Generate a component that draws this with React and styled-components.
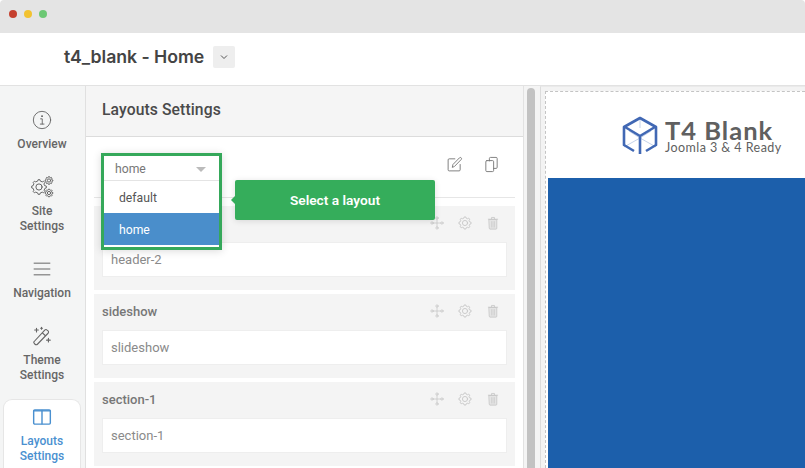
import React from "react";
import styled, { createGlobalStyle } from "styled-components";

const Global = createGlobalStyle`
  html, body { margin: 0; padding: 0; background: #fff; }
  body { width: 805px; height: 468px; overflow: hidden; font-family: Roboto, "Liberation Sans", sans-serif; }
  * { box-sizing: border-box; }
`;
const Page = styled.div`width:805px;height:468px;overflow:hidden;display:flex;flex-direction:column;background:#fff;`;
const TitleBar = styled.div`height:33px;flex:none;background:#e4e4e4;border-radius:4px 4px 0 0;display:flex;align-items:center;gap:7px;padding:0 0 5px 9px;`;
const Dot = styled.span`width:8px;height:8px;border-radius:50%;background:${p => p.$c};`;
const TopBar = styled.div`height:53px;flex:none;background:#fff;border-bottom:1px solid #e2e2e2;display:flex;align-items:center;padding:0 0 4px 64px;gap:9px;`;
const PageTitle = styled.div`font-family:Inter,Roboto,sans-serif;font-size:17.7px;font-weight:600;color:#444;letter-spacing:-0.05px;margin-top:-2px;`;
const TitleBtn = styled.div`width:22px;height:22px;background:#eee;border-radius:2px;display:flex;align-items:center;justify-content:center;`;
const Body = styled.div`flex:1;display:flex;min-height:0;`;
const Sidebar = styled.nav`width:86px;flex:none;background:#f4f5f5;border-right:1px solid #e0e0e0;padding:22px 4px 0 3px;display:flex;flex-direction:column;align-items:stretch;`;
const NavItem = styled.div`
  display:flex;flex-direction:column;align-items:center;text-align:center;
  height:${p => p.$h}px;padding-top:${p => p.$active ? 5 : 0}px;
  color:${p => p.$active ? "#4a90d0" : "#666"};font-size:12px;font-weight:500;line-height:15px;
  ${p => p.$active ? "background:#fff;border:1px solid #e6e6e6;border-bottom:none;border-radius:9px 9px 0 0;margin-top:-1px;" : ""}
`;
const NavIcon = styled.div`height:24px;display:flex;align-items:center;justify-content:center;margin-bottom:5px;color:${p => p.$active ? "#4a90d0" : "#666"};`;
const Panel = styled.section`width:437px;flex:none;background:#fff;display:flex;flex-direction:column;position:relative;`;
const PanelHead = styled.header`height:51px;flex:none;background:#f5f5f5;border-bottom:1px solid #dcdcdc;padding:0 16px 3px;display:flex;align-items:center;font-size:15.7px;font-weight:500;color:#4a4a4a;letter-spacing:.1px;`;
const Toolbar = styled.div`height:61px;flex:none;margin:0 8px;border-bottom:1px solid #e6e6e6;display:flex;justify-content:flex-end;align-items:flex-start;gap:20px;padding:19px 15px 0 0;color:#777;`;
const Rows = styled.div`display:flex;flex-direction:column;gap:4px;padding:8px 8px 0;`;
const Row = styled.div`height:84px;flex:none;background:#f4f4f4;padding:0 8px;display:flex;flex-direction:column;`;
const RowHead = styled.div`height:36px;flex:none;display:flex;align-items:center;justify-content:space-between;padding:0 7px 2px 0;font-size:13px;font-weight:500;color:#777;`;
const RowTools = styled.div`display:flex;gap:14px;color:#c6c6c6;`;
const RowInput = styled.div`height:35px;background:#fff;border:1px solid #eee;padding:0 8px;display:flex;align-items:center;font-size:13px;color:#8a8a8a;`;
const Dropdown = styled.div`position:absolute;left:15px;top:67px;width:121px;height:97px;border:3px solid #35a85a;background:#fff;box-shadow:0 1px 8px rgba(0,0,0,.15);font-size:12.2px;`;
const Selected = styled.div`height:25px;border-bottom:1px solid #e4e4e4;display:flex;align-items:center;justify-content:space-between;padding:1px 13px 0 11px;color:#777;`;
const Caret = styled.span`width:0;height:0;border-left:5.5px solid transparent;border-right:5.5px solid transparent;border-top:5.5px solid #bbb;margin-top:1px;`;
const Option = styled.div`height:32px;display:flex;align-items:center;padding:1px 0 0 15px;background:${p => p.$on ? "#4a8ecb" : "#fff"};color:${p => p.$on ? "#fff" : "#555"};`;
const Tip = styled.div`position:absolute;left:149px;top:94px;width:200px;height:40px;background:#35ad5b;border-radius:2px;color:#fff;font-size:13.7px;font-weight:600;display:flex;align-items:center;justify-content:center;box-shadow:0 1px 6px rgba(0,0,0,.12);
  &::before{content:"";position:absolute;left:-4px;top:16px;border-top:4px solid transparent;border-bottom:4px solid transparent;border-right:4px solid #35ad5b;}`;
const Scroll = styled.div`width:17px;flex:none;background:#f4f4f4;border-left:1px solid #e2e2e2;padding:2px 5px 0 3px;`;
const Thumb = styled.div`height:100%;background:#c2c2c2;border-radius:4px 4px 0 0;`;
const Preview = styled.div`flex:1;background:#f3f3f3;border-left:1px solid #dcdcdc;border-top:1px solid #eaeaea;padding:4px 0 0 4px;min-width:0;display:flex;`;
const Frame = styled.div`flex:1;border:1px dashed #c4c4c4;border-right:none;border-bottom:none;background:#fff;padding-left:2px;display:flex;flex-direction:column;`;
const LogoBar = styled.div`height:86px;flex:none;background:#fff;display:flex;align-items:center;padding:2px 0 0 74px;gap:7px;`;
const LogoText = styled.div`display:flex;flex-direction:column;color:#606060;`;
const LogoMain = styled.div`font-family:Lato,sans-serif;font-size:25.5px;font-weight:700;line-height:23px;letter-spacing:1px;`;
const LogoSub = styled.div`font-family:Lato,sans-serif;font-size:12.5px;font-weight:400;line-height:12px;letter-spacing:.45px;`;
const Hero = styled.div`flex:1;background:#1c5fab;`;

const Svg = ({ s = 16, children, w = 1.2, vb = 24 }) => (
  <svg width={s} height={s} viewBox={`0 0 ${vb} ${vb}`} fill="none" stroke="currentColor" strokeWidth={w} strokeLinecap="round" strokeLinejoin="round">{children}</svg>
);
const Gear = ({ cx, cy, r, teeth = 8 }) => {
  let d = "";
  for (let i = 0; i < teeth; i++) {
    const a = (i / teeth) * Math.PI * 2, st = Math.PI / teeth;
    const p = (rr, t) => `${(cx + rr * Math.cos(t)).toFixed(2)} ${(cy + rr * Math.sin(t)).toFixed(2)}`;
    d += `${i ? "L" : "M"}${p(r * .82, a - st * .55)}L${p(r, a - st * .3)}L${p(r, a + st * .3)}L${p(r * .82, a + st * .55)}`;
  }
  return <g><path d={d + "Z"} /><circle cx={cx} cy={cy} r={r * .42} /></g>;
};
const InfoIcon = () => <Svg s={20} w={1.1}><circle cx="12" cy="12" r="10.4" /><path d="M10.3 10.6h2v6.2M10 16.9h4.4" /><path d="M11.9 7.4h.3" strokeWidth="2" /></Svg>;
const GearsIcon = () => <Svg s={24} w={1}><Gear cx={9} cy={12} r={7.4} /><Gear cx={19} cy={5.5} r={3.9} /><Gear cx={19} cy={18} r={3.9} /></Svg>;
const MenuIcon = () => <Svg s={20} w={1.2}><path d="M2.5 5h19M2.5 12h19M2.5 19h19" /></Svg>;
const WandIcon = () => <Svg s={22} w={1.2}><path d="M3.5 18 15 5.5a1.8 1.8 0 0 1 2.6 0l1 .9a1.8 1.8 0 0 1 0 2.6L7 21a1.8 1.8 0 0 1-2.6 0l-.9-.9a1.5 1.5 0 0 1 0-2.1ZM12.5 8.5l3.5 3.5" /><path d="M6 3.5v4M4 5.5h4M19 14.5v4M17 16.5h4M11.5 2.5v2M10.5 3.5h2" /></Svg>;
const LayoutIcon = () => <Svg s={20} w={1.7}><rect x="2" y="3.5" width="20" height="17" rx="1.3" /><path d="M12 4v16M2 4.6h20" /></Svg>;
const EditIcon = () => <Svg s={17} w={1.3}><path d="M12.5 4H4.5A1.5 1.5 0 0 0 3 5.5v14A1.5 1.5 0 0 0 4.5 21h14a1.5 1.5 0 0 0 1.5-1.5V12" /><path d="M9 15.5l.8-3.5L19 2.6a1.6 1.6 0 0 1 2.4 2.4L12.2 14.5Z" /></Svg>;
const CopyIcon = () => <Svg s={17} w={1.3}><path d="M9 7V3.5A1.5 1.5 0 0 1 10.500 2h8A1.500 1.500 0 0 1 20 3.500V16a1.500 1.500 0 0 1-1.500 1.500H15" /><path d="M5.500 6.500h8A1.500 1.500 0 0 1 15 8v12.500a1.500 1.500 0 0 1-1.500 1.500h-8A1.500 1.500 0 0 1 4 20.500V8a1.500 1.500 0 0 1 1.500-1.500Z" /></Svg>;
const MoveIcon = () => <Svg s={14} w={1.3}><path d="M12 5v14M5 12h14" /><circle cx="12" cy="3.500" r="2" /><circle cx="12" cy="20.500" r="2" /><circle cx="3.500" cy="12" r="2" /><circle cx="20.500" cy="12" r="2" /></Svg>;
const CogIcon = () => <Svg s={14} w={1.5}><Gear cx={12} cy={12} r={10.500} /></Svg>;
const TrashIcon = () => <Svg s={14} w={1.4}><path d="M4 5.500h16M9.500 5V2.500h5V5" /><path d="M5.500 6h13v15a1.500 1.500 0 0 1-1.500 1.500H7A1.500 1.500 0 0 1 5.500 21Z" fill="currentColor" fillOpacity=".35" /><path d="M10 9.500v9.500M14 9.500v9.500" /></Svg>;
const Chevron = () => <svg width="8" height="6" viewBox="0 0 8 6" fill="none" stroke="#555" strokeWidth="1"><path d="M1 1.500 4 4.500 7 1.500" /></svg>;
const Cube = () => (
  <svg width="36" height="40" viewBox="0 0 36 40" fill="none" strokeLinejoin="round">
    <path d="M18 2V12M18 22 2 31M18 22 34 31M18 22 7 15M18 22 29 15" stroke="#c4d2ea" strokeWidth="1" />
    <path d="M12 35 2 29V11L18 2 34 11V29L24 35" stroke="#4168b4" strokeWidth="2.600" />
    <path d="M3 11 18 20 33 11M18 20V38" stroke="#4168b4" strokeWidth="2.600" />
  </svg>
);
const nav = [
  { icon: <InfoIcon />, label: ["Overview"], h: 68 },
  { icon: <GearsIcon />, label: ["Site", "Settings"], h: 83 },
  { icon: <MenuIcon />, label: ["Navigation"], h: 67 },
  { icon: <WandIcon />, label: ["Theme", "Settings"], h: 77 },
  { icon: <LayoutIcon />, label: ["Layouts", "Settings"], h: 70, active: true },
];
const rows = [["", "header-2"], ["sideshow", "slideshow"], ["section-1", "section-1"]];

export default function App() {
  return (
    <Page>
      <Global />
      <TitleBar><Dot $c="#c5402f" /><Dot $c="#f2c230" /><Dot $c="#6cc874" /></TitleBar>
      <TopBar><PageTitle>t4_blank - Home</PageTitle><TitleBtn><Chevron /></TitleBtn></TopBar>
      <Body>
        <Sidebar>
          {nav.map(n => (
            <NavItem key={n.label[0]} $h={n.h} $active={n.active}>
              <NavIcon $active={n.active}>{n.icon}</NavIcon>
              {n.label.map(l => <div key={l}>{l}</div>)}
            </NavItem>
          ))}
        </Sidebar>
        <Panel>
          <PanelHead>Layouts Settings</PanelHead>
          <Toolbar><EditIcon /><CopyIcon /></Toolbar>
          <Rows>
            {rows.map(([t, v]) => (
              <Row key={v}>
                <RowHead><span>{t}</span><RowTools><MoveIcon /><CogIcon /><TrashIcon /></RowTools></RowHead>
                <RowInput>{v}</RowInput>
              </Row>
            ))}
          </Rows>
          <Dropdown>
            <Selected>home<Caret /></Selected>
            <Option>default</Option>
            <Option $on>home</Option>
          </Dropdown>
          <Tip>Select a layout</Tip>
        </Panel>
        <Scroll><Thumb /></Scroll>
        <Preview>
          <Frame>
            <LogoBar><Cube /><LogoText><LogoMain>T4 Blank</LogoMain><LogoSub>Joomla 3 &amp; 4 Ready</LogoSub></LogoText></LogoBar>
            <Hero />
          </Frame>
        </Preview>
      </Body>
    </Page>
  );
}
